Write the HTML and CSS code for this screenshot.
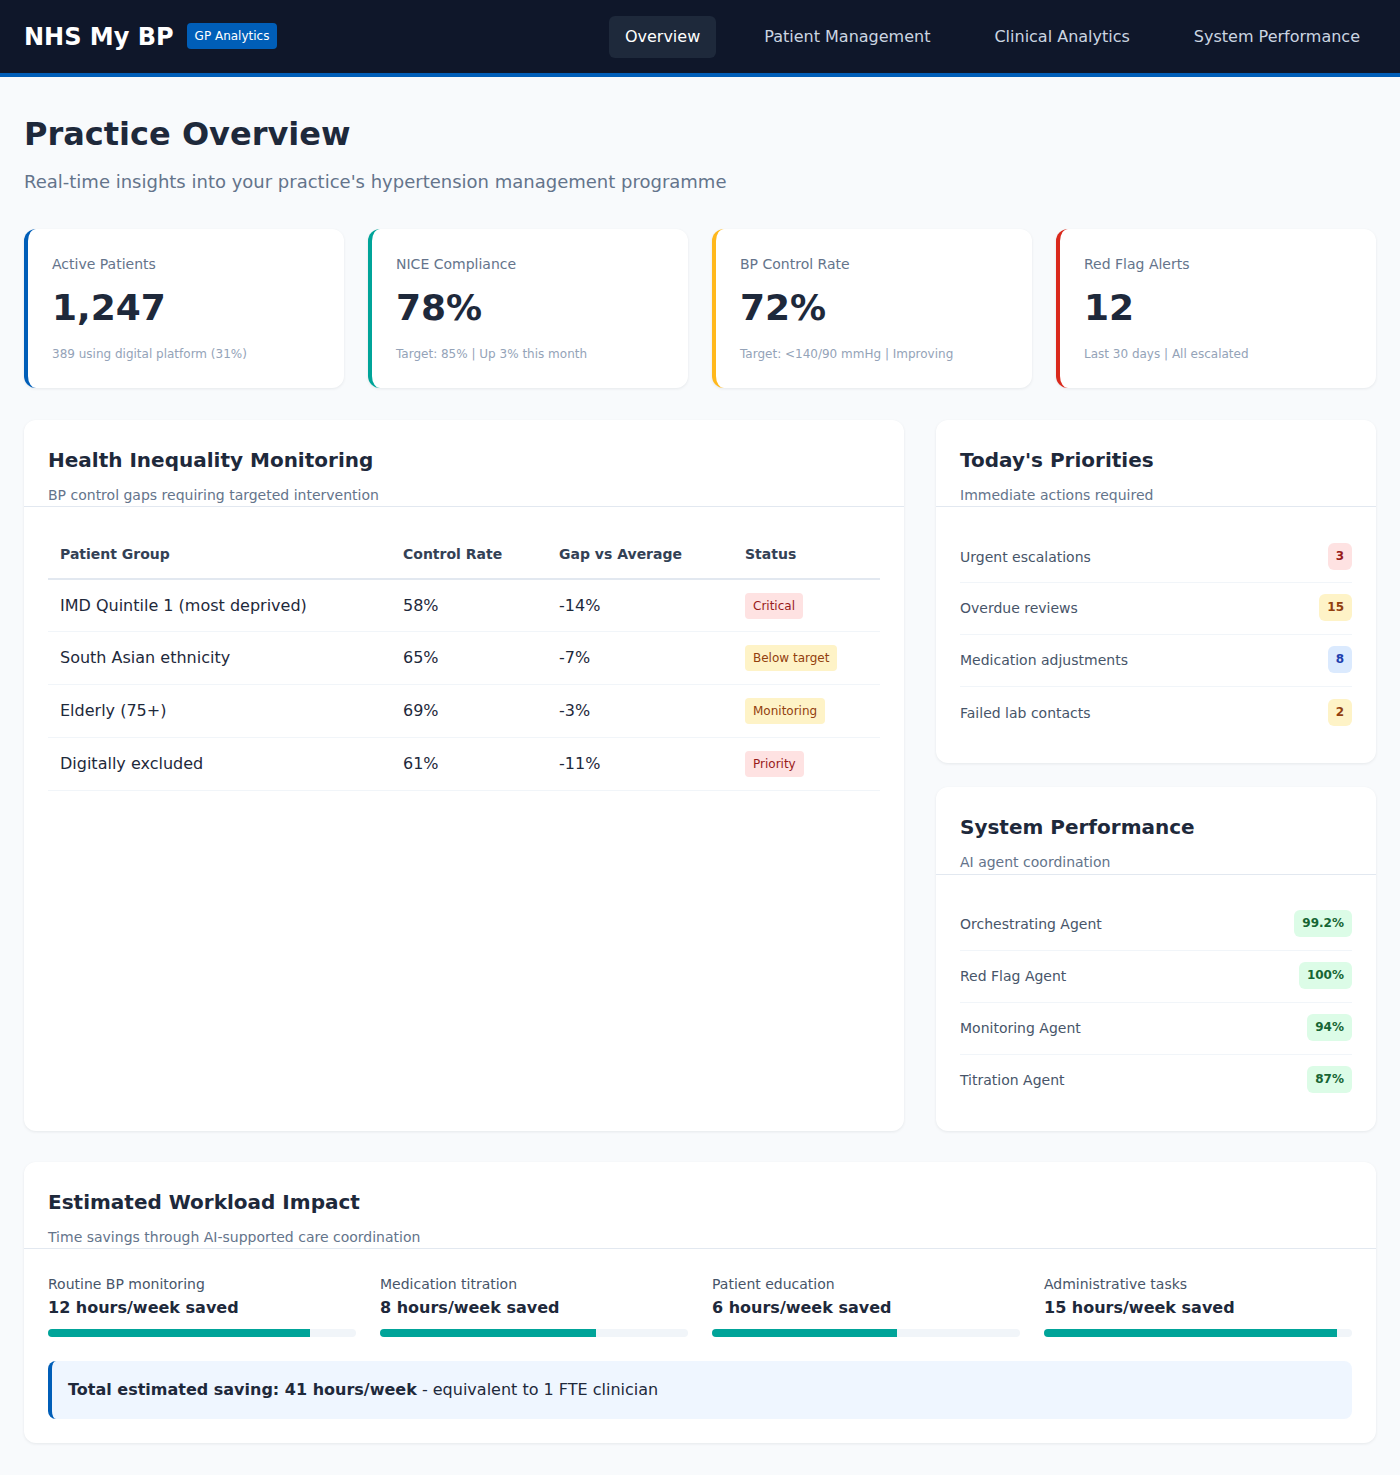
FILE: index.html
```html
<!DOCTYPE html>
<html lang="en">
<head>
<meta charset="utf-8">
<title>NHS My BP - GP Analytics</title>
<link rel="stylesheet" href="styles.css">
</head>
<body>
<header class="topbar">
  <div class="brand">
    <span class="logo">NHS My BP</span>
    <span class="brand-badge">GP Analytics</span>
  </div>
  <nav class="nav">
    <a class="nav-item active">Overview</a>
    <a class="nav-item">Patient Management</a>
    <a class="nav-item">Clinical Analytics</a>
    <a class="nav-item">System Performance</a>
  </nav>
</header>

<main class="main">
  <h1 class="page-title">Practice Overview</h1>
  <p class="page-sub">Real-time insights into your practice's hypertension management programme</p>

  <section class="stats">
    <div class="stat stat-blue">
      <div class="stat-label">Active Patients</div>
      <div class="stat-value">1,247</div>
      <div class="stat-note">389 using digital platform (31%)</div>
    </div>
    <div class="stat stat-teal">
      <div class="stat-label">NICE Compliance</div>
      <div class="stat-value">78%</div>
      <div class="stat-note">Target: 85% | Up 3% this month</div>
    </div>
    <div class="stat stat-yellow">
      <div class="stat-label">BP Control Rate</div>
      <div class="stat-value">72%</div>
      <div class="stat-note">Target: &lt;140/90 mmHg | Improving</div>
    </div>
    <div class="stat stat-red">
      <div class="stat-label">Red Flag Alerts</div>
      <div class="stat-value">12</div>
      <div class="stat-note">Last 30 days | All escalated</div>
    </div>
  </section>

  <section class="grid">
    <div class="card card-tall">
      <div class="card-head">
        <h2 class="card-title">Health Inequality Monitoring</h2>
        <p class="card-sub">BP control gaps requiring targeted intervention</p>
      </div>
      <div class="card-body">
        <table class="table">
          <thead>
            <tr>
              <th class="c1">Patient Group</th>
              <th class="c2">Control Rate</th>
              <th class="c3">Gap vs Average</th>
              <th class="c4">Status</th>
            </tr>
          </thead>
          <tbody>
            <tr>
              <td>IMD Quintile 1 (most deprived)</td>
              <td>58%</td>
              <td>-14%</td>
              <td><span class="tag tag-red">Critical</span></td>
            </tr>
            <tr>
              <td>South Asian ethnicity</td>
              <td>65%</td>
              <td>-7%</td>
              <td><span class="tag tag-yellow">Below target</span></td>
            </tr>
            <tr>
              <td>Elderly (75+)</td>
              <td>69%</td>
              <td>-3%</td>
              <td><span class="tag tag-yellow">Monitoring</span></td>
            </tr>
            <tr>
              <td>Digitally excluded</td>
              <td>61%</td>
              <td>-11%</td>
              <td><span class="tag tag-red">Priority</span></td>
            </tr>
          </tbody>
        </table>
      </div>
    </div>

    <div class="card">
      <div class="card-head">
        <h2 class="card-title">Today's Priorities</h2>
        <p class="card-sub">Immediate actions required</p>
      </div>
      <div class="card-body">
        <ul class="list">
          <li class="list-item"><span>Urgent escalations</span><span class="count count-red">3</span></li>
          <li class="list-item"><span>Overdue reviews</span><span class="count count-yellow">15</span></li>
          <li class="list-item"><span>Medication adjustments</span><span class="count count-blue">8</span></li>
          <li class="list-item"><span>Failed lab contacts</span><span class="count count-yellow">2</span></li>
        </ul>
      </div>
    </div>

    <div class="card">
      <div class="card-head">
        <h2 class="card-title">System Performance</h2>
        <p class="card-sub">AI agent coordination</p>
      </div>
      <div class="card-body">
        <ul class="list">
          <li class="list-item"><span>Orchestrating Agent</span><span class="count count-green">99.2%</span></li>
          <li class="list-item"><span>Red Flag Agent</span><span class="count count-green">100%</span></li>
          <li class="list-item"><span>Monitoring Agent</span><span class="count count-green">94%</span></li>
          <li class="list-item"><span>Titration Agent</span><span class="count count-green">87%</span></li>
        </ul>
      </div>
    </div>
  </section>

  <section class="card workload">
    <div class="card-head">
      <h2 class="card-title">Estimated Workload Impact</h2>
      <p class="card-sub">Time savings through AI-supported care coordination</p>
    </div>
    <div class="card-body">
      <div class="savings">
        <div class="saving">
          <div class="saving-label">Routine BP monitoring</div>
          <div class="saving-value">12 hours/week saved</div>
          <div class="bar"><div class="bar-fill" style="width:85%"></div></div>
        </div>
        <div class="saving">
          <div class="saving-label">Medication titration</div>
          <div class="saving-value">8 hours/week saved</div>
          <div class="bar"><div class="bar-fill" style="width:70%"></div></div>
        </div>
        <div class="saving">
          <div class="saving-label">Patient education</div>
          <div class="saving-value">6 hours/week saved</div>
          <div class="bar"><div class="bar-fill" style="width:60%"></div></div>
        </div>
        <div class="saving">
          <div class="saving-label">Administrative tasks</div>
          <div class="saving-value">15 hours/week saved</div>
          <div class="bar"><div class="bar-fill" style="width:95%"></div></div>
        </div>
      </div>
      <div class="total">
        <strong>Total estimated saving: 41 hours/week</strong> - equivalent to 1 FTE clinician
      </div>
    </div>
  </section>
</main>
</body>
</html>
```

FILE: styles.css
```css
* {
  box-sizing: border-box;
}

html, body {
  margin: 0;
  padding: 0;
}

body {
  font-family: "DejaVu Sans", "Liberation Sans", sans-serif;
  background: #f8fafc;
  color: #1e293b;
  line-height: 1.6;
}

/* Header */
.topbar {
  display: flex;
  align-items: center;
  justify-content: space-between;
  height: 77px;
  padding: 0 24px;
  background: #0f172a;
  border-bottom: 4px solid #005eb8;
}

.brand {
  display: flex;
  align-items: center;
  gap: 13px;
}

.logo {
  color: #ffffff;
  font-size: 24px;
  font-weight: bold;
  line-height: 1.2;
  margin-top: 2px;
}

.brand-badge {
  background: #005eb8;
  color: #ffffff;
  font-size: 12px;
  line-height: 18px;
  padding: 4px 8px;
  border-radius: 4px;
}

.nav {
  display: flex;
  gap: 32px;
}

.nav-item {
  color: #cbd5e1;
  font-size: 16px;
  line-height: 22px;
  padding: 10px 16px;
  border-radius: 6px;
}

.nav-item.active {
  background: #1e293b;
  color: #ffffff;
}

/* Main */
.main {
  padding: 33px 24px 24px;
}

.page-title {
  margin: 0;
  font-size: 32px;
  font-weight: bold;
  line-height: 1.5;
  color: #1e293b;
}

.page-sub {
  margin: 10px 0 0;
  font-size: 18px;
  color: #64748b;
}

/* Stats */
.stats {
  display: grid;
  grid-template-columns: repeat(4, 1fr);
  gap: 24px;
  margin-top: 32px;
}

.stat {
  background: #ffffff;
  border-radius: 12px;
  border-left: 4px solid #005eb8;
  box-shadow: 0 1px 3px rgba(15, 23, 42, 0.08);
  padding: 24px;
  height: 159px;
}

.stat-blue { border-left-color: #005eb8; }
.stat-teal { border-left-color: #00a499; }
.stat-yellow { border-left-color: #ffb81c; }
.stat-red { border-left-color: #da291c; }

.stat-label {
  font-size: 14px;
  color: #64748b;
}

.stat-value {
  font-size: 36px;
  font-weight: bold;
  line-height: 43px;
  margin: 11px 0 16px;
  color: #1e293b;
}

.stat-note {
  font-size: 12px;
  color: #94a3b8;
}

/* Grid */
.grid {
  display: grid;
  grid-template-columns: 1fr 440px;
  grid-template-rows: auto auto;
  column-gap: 32px;
  row-gap: 24px;
  margin-top: 32px;
}

.card {
  background: #ffffff;
  border-radius: 12px;
  box-shadow: 0 1px 3px rgba(15, 23, 42, 0.08);
}

.card-tall {
  grid-row: 1 / span 2;
}

.card-head {
  padding: 24px 24px 0;
  border-bottom: 1px solid #e2e8f0;
}

.card-title {
  margin: 0;
  font-size: 20px;
  font-weight: bold;
  line-height: 32px;
  color: #1e293b;
}

.card-sub {
  margin: 8px 0 0;
  font-size: 14px;
  color: #64748b;
}

.card-body {
  padding: 24px;
}

/* Table */
.table {
  width: 100%;
  border-collapse: collapse;
  table-layout: fixed;
}

.table th {
  text-align: left;
  font-size: 14px;
  font-weight: bold;
  color: #334155;
  padding: 12px;
  border-bottom: 2px solid #e2e8f0;
}

.table th.c1 { width: 343px; }
.table th.c2 { width: 156px; }
.table th.c3 { width: 186px; }

.table td {
  font-size: 16px;
  color: #1e293b;
  padding: 12px;
  height: 53px;
  border-bottom: 1px solid #f1f5f9;
  vertical-align: middle;
}

.tag {
  display: inline-block;
  font-size: 12px;
  line-height: 18px;
  padding: 4px 8px;
  border-radius: 4px;
  vertical-align: middle;
}

.tag-red {
  background: #fee2e2;
  color: #991b1b;
}

.tag-yellow {
  background: #fef3c7;
  color: #92400e;
}

/* Lists */
.list {
  list-style: none;
  margin: 0;
  padding: 0;
}

.list-item {
  display: flex;
  align-items: center;
  justify-content: space-between;
  height: 52px;
  font-size: 14px;
  color: #475569;
  border-bottom: 1px solid #f1f5f9;
}

.list-item:first-child {
  padding-top: 1px;
}

.list-item:last-child {
  border-bottom: none;
}

.count {
  font-size: 12px;
  font-weight: bold;
  line-height: 19px;
  padding: 4px 8px;
  border-radius: 6px;
  margin-top: -2px;
}

.count-red { background: #fee2e2; color: #991b1b; }
.count-yellow { background: #fef3c7; color: #92400e; }
.count-blue { background: #dbeafe; color: #1e40af; }
.count-green { background: #dcfce7; color: #166534; }

/* Workload */
.workload {
  margin-top: 31px;
}

.savings {
  display: grid;
  grid-template-columns: repeat(4, 1fr);
  gap: 24px;
}

.saving-label {
  font-size: 14px;
  color: #475569;
}

.saving-value {
  font-size: 16px;
  font-weight: bold;
  color: #1e293b;
}

.bar {
  height: 8px;
  margin-top: 8px;
  background: #f1f5f9;
  border-radius: 4px;
  overflow: hidden;
}

.bar-fill {
  height: 100%;
  background: #00a499;
}

.total {
  margin-top: 24px;
  padding: 16px;
  background: #eff6ff;
  border-left: 4px solid #005eb8;
  border-radius: 8px;
  font-size: 16px;
  color: #1e293b;
}

.total strong {
  font-weight: bold;
}
```
